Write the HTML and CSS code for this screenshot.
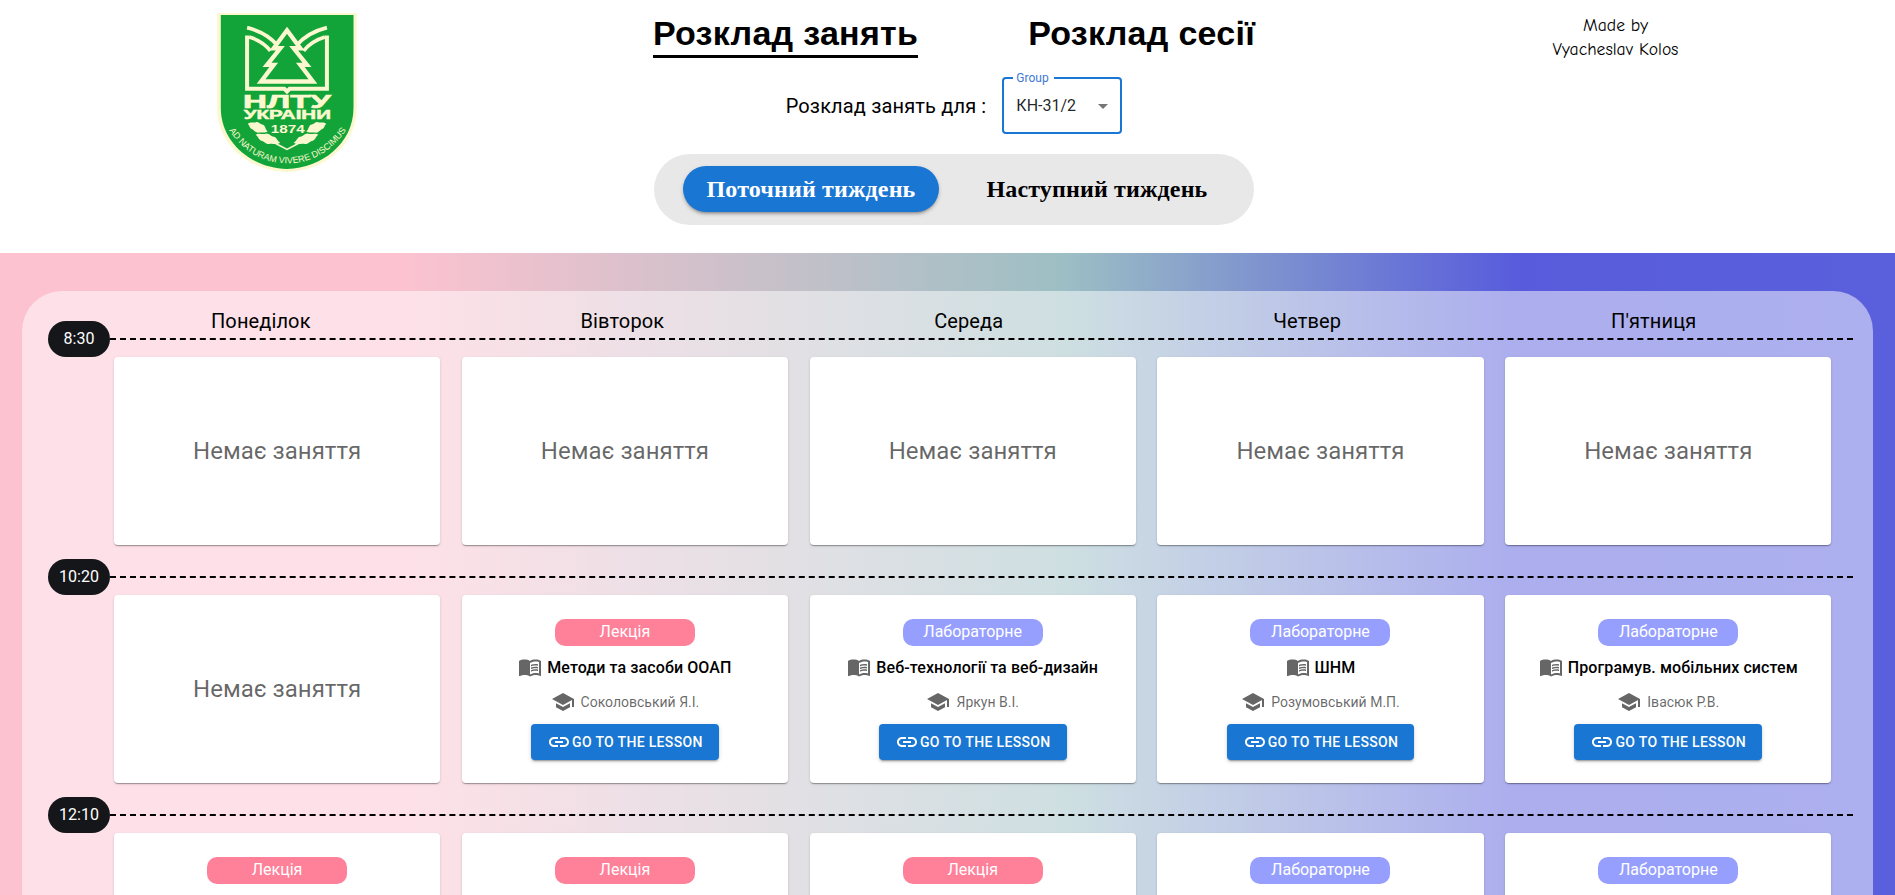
FILE: index.html
```html
<!DOCTYPE html>
<html lang="uk">
<head>
<meta charset="utf-8">
<title>Розклад занять</title>
<link rel="stylesheet" href="styles.css">
</head>
<body>
<div class="app">
  <header class="top">
    <div class="logo-col">
      <svg class="logo" viewBox="110 40 420 478" aria-label="НЛТУ України">
        <path class="cream" d="M110 40H530V325C530 440 430 515 320 518C210 515 110 440 110 325Z"/>
        <path class="green" d="M121 46H520V325C520 432 425 506 320 509C215 506 121 432 121 325Z"/>
        <path class="line" d="M200 108V268H312L320 276L328 268H440V108"/>
        <path class="line thin" d="M200 84C240 94 270 112 292 138M206 112C232 120 255 134 270 154"/>
        <path class="line thin" d="M440 84C400 94 370 112 348 138M434 112C408 120 385 134 370 154"/>
        <path class="tree" d="M320 92L360 146H340L380 196H360L398 246H242L280 196H260L300 146H280Z"/>
        <text class="logo-t big" x="188" y="326" textLength="264" lengthAdjust="spacingAndGlyphs">НЛТУ</text>
        <text class="logo-t mid" x="190" y="358" textLength="262" lengthAdjust="spacingAndGlyphs">УКРАІНИ</text>
        <text class="logo-t yr" x="271" y="400" textLength="102" lengthAdjust="spacingAndGlyphs">1874</text>
        <path class="cream" d="M202 374C208 366 222 372 228 368C236 366 240 376 248 376C256 380 254 390 262 396C250 402 240 398 232 400C222 398 220 390 212 388C206 384 208 378 202 374Z"/>
        <path class="cream" d="M226 406C236 398 248 408 258 402C268 402 272 412 282 412C290 416 290 424 300 430C288 438 276 430 266 434C256 434 252 426 242 424C234 420 234 412 226 406Z"/>
        <path class="cream" d="M438 374C432 366 418 372 412 368C404 366 400 376 392 376C384 380 386 390 378 396C390 402 400 398 408 400C418 398 420 390 428 388C434 384 432 378 438 374Z"/>
        <path class="cream" d="M414 406C404 398 392 408 382 402C372 402 368 412 358 412C350 416 350 424 340 430C352 438 364 430 374 434C384 434 388 426 398 424C406 420 406 412 414 406Z"/>
        <path class="line thin2" d="M286 432L320 450L354 432"/>
        <path id="motto" class="none" d="M146 392C190 462 255 492 320 492C385 492 450 462 498 392"/>
        <text class="logo-t motto"><textPath href="#motto" startOffset="50%" text-anchor="middle">AD NATURAM VIVERE DISCIMUS</textPath></text>
      </svg>
    </div>
    <div class="mid-col">
      <nav class="tabs">
        <a class="tab active">Розклад занять</a>
        <a class="tab">Розклад сесії</a>
      </nav>
      <div class="group-row">
        <span class="group-label">Розклад занять для :</span>
        <div class="select">
          <span class="select-legend">Group</span>
          <span class="select-value">КН-31/2</span>
          <svg class="select-arrow" viewBox="0 0 24 24"><path d="M7 10l5 5 5-5z"/></svg>
        </div>
      </div>
      <div class="week">
        <button class="week-btn on">Поточний тиждень</button>
        <button class="week-btn">Наступний тиждень</button>
      </div>
    </div>
    <div class="made">Made by<br>Vyacheslav Kolos</div>
  </header>

  <main class="stage">
    <section class="panel">
      <div class="days">
        <span>Понеділок</span><span>Вівторок</span><span>Середа</span><span>Четвер</span><span>П'ятниця</span>
      </div>

      <div class="slot">
        <div class="time"><span class="pill">8:30</span><i class="dash"></i></div>
        <div class="cards">
          <article class="card empty">Немає заняття</article>
          <article class="card empty">Немає заняття</article>
          <article class="card empty">Немає заняття</article>
          <article class="card empty">Немає заняття</article>
          <article class="card empty">Немає заняття</article>
        </div>
      </div>

      <div class="slot">
        <div class="time"><span class="pill">10:20</span><i class="dash"></i></div>
        <div class="cards">
          <article class="card empty">Немає заняття</article>
          <article class="card">
            <span class="badge lec">Лекція</span>
            <div class="subject"><svg class="ico" viewBox="0 0 24 24"><use href="#i-book"/></svg><span>Методи та засоби ООАП</span></div>
            <div class="teacher"><svg class="ico" viewBox="0 0 24 24"><use href="#i-school"/></svg><span>Соколовський Я.І.</span></div>
            <a class="go"><svg class="ico" viewBox="0 0 24 24"><use href="#i-link"/></svg>Go to the lesson</a>
          </article>
          <article class="card">
            <span class="badge lab">Лабораторне</span>
            <div class="subject"><svg class="ico" viewBox="0 0 24 24"><use href="#i-book"/></svg><span>Веб-технології та веб-дизайн</span></div>
            <div class="teacher"><svg class="ico" viewBox="0 0 24 24"><use href="#i-school"/></svg><span>Яркун В.І.</span></div>
            <a class="go"><svg class="ico" viewBox="0 0 24 24"><use href="#i-link"/></svg>Go to the lesson</a>
          </article>
          <article class="card">
            <span class="badge lab">Лабораторне</span>
            <div class="subject"><svg class="ico" viewBox="0 0 24 24"><use href="#i-book"/></svg><span>ШНМ</span></div>
            <div class="teacher"><svg class="ico" viewBox="0 0 24 24"><use href="#i-school"/></svg><span>Розумовський М.П.</span></div>
            <a class="go"><svg class="ico" viewBox="0 0 24 24"><use href="#i-link"/></svg>Go to the lesson</a>
          </article>
          <article class="card">
            <span class="badge lab">Лабораторне</span>
            <div class="subject"><svg class="ico" viewBox="0 0 24 24"><use href="#i-book"/></svg><span>Програмув. мобільних систем</span></div>
            <div class="teacher"><svg class="ico" viewBox="0 0 24 24"><use href="#i-school"/></svg><span>Івасюк Р.В.</span></div>
            <a class="go"><svg class="ico" viewBox="0 0 24 24"><use href="#i-link"/></svg>Go to the lesson</a>
          </article>
        </div>
      </div>

      <div class="slot">
        <div class="time"><span class="pill">12:10</span><i class="dash"></i></div>
        <div class="cards">
          <article class="card"><span class="badge lec">Лекція</span></article>
          <article class="card"><span class="badge lec">Лекція</span></article>
          <article class="card"><span class="badge lec">Лекція</span></article>
          <article class="card"><span class="badge lab">Лабораторне</span></article>
          <article class="card"><span class="badge lab">Лабораторне</span></article>
        </div>
      </div>
    </section>
  </main>
</div>

<svg class="sprite" aria-hidden="true">
  <symbol id="i-book" viewBox="0 0 24 24"><path d="M21 5c-1.11-.35-2.33-.5-3.5-.5-1.95 0-4.05.4-5.5 1.5-1.45-1.1-3.55-1.5-5.5-1.5S2.45 4.9 1 6v14.65c0 .25.25.5.5.5.1 0 .15-.05.25-.05C3.1 20.45 5.05 20 6.5 20c1.95 0 4.05.4 5.5 1.5 1.35-.85 3.8-1.5 5.5-1.5 1.65 0 3.35.3 4.75 1.05.1.05.15.05.25.05.25 0 .5-.25.5-.5V6c-.6-.45-1.25-.75-2-1zm0 13.5c-1.1-.35-2.3-.5-3.5-.5-1.7 0-4.15.65-5.5 1.5V8c1.35-.85 3.8-1.5 5.5-1.5 1.2 0 2.4.15 3.5.5v11.5z"/><path d="M17.5 10.5c.88 0 1.73.09 2.5.26V9.24c-.79-.15-1.64-.24-2.5-.24-1.7 0-3.24.29-4.5.83v1.66c1.13-.64 2.7-.99 4.5-.99zM13 12.49v1.66c1.13-.64 2.7-.99 4.5-.99.88 0 1.73.09 2.5.26V11.9c-.79-.15-1.64-.24-2.5-.24-1.7 0-3.24.3-4.5.83zm4.5 1.84c-1.7 0-3.24.29-4.5.83v1.66c1.13-.64 2.7-.99 4.5-.99.88 0 1.73.09 2.5.26v-1.52c-.79-.16-1.64-.24-2.5-.24z"/></symbol>
  <symbol id="i-school" viewBox="0 0 24 24"><path d="M5 13.18v4L12 21l7-3.82v-4L12 17l-7-3.82zM12 3 1 9l11 6 9-4.91V17h2V9L12 3z"/></symbol>
  <symbol id="i-link" viewBox="0 0 24 24"><path d="M3.9 12c0-1.71 1.39-3.1 3.1-3.1h4V7H7c-2.76 0-5 2.24-5 5s2.24 5 5 5h4v-1.9H7c-1.71 0-3.1-1.39-3.1-3.1zM8 13h8v-2H8v2zm9-6h-4v1.9h4c1.71 0 3.1 1.39 3.1 3.1s-1.39 3.1-3.1 3.1h-4V17h4c2.76 0 5-2.24 5-5s-2.24-5-5-5z"/></symbol>
</svg>
</body>
</html>
```

FILE: styles.css
```css
* { box-sizing: border-box; }
html, body { margin: 0; height: 100%; overflow: hidden; }
body { font-family: Roboto, "Noto Sans", sans-serif; color: #000; background: #fff; }
.sprite { display: none; }

.app { height: 895px; display: flex; flex-direction: column; overflow: hidden; }

/* header */
.top { height: 253px; flex: none; display: grid; grid-template-columns: 574px 760px 1fr; }
.logo-col { display: flex; justify-content: center; padding-top: 13px; }
.logo { width: 140px; height: 159px; }
.cream { fill: #fbf8cf; }
.green { fill: #12a439; }
.line { fill: none; stroke: #fbf8cf; stroke-width: 12; }
.line.thin { stroke-width: 11; }
.line.thin2 { stroke-width: 5; }
.none { fill: none; }
.tree { fill: #12a439; stroke: #fbf8cf; stroke-width: 13; stroke-linejoin: miter; }
.logo-t { fill: #fbf8cf; font-family: "Liberation Sans", sans-serif; font-weight: 700; }
.big { font-size: 56px; stroke: #fbf8cf; stroke-width: 2; }
.mid { font-size: 38px; stroke: #fbf8cf; stroke-width: 1.5; }
.yr { font-size: 34px; }
.motto { font-size: 27px; font-weight: 400; }

.mid-col { display: flex; flex-direction: column; align-items: center; }
.tabs { display: flex; gap: 110px; height: 58px; padding-top: 12px; }
.tab { font-family: "Liberation Sans", Arial, sans-serif; font-size: 34px; font-weight: 700; line-height: 43px; height: 46px; letter-spacing: .28px; }
.tab.active { border-bottom: 3px solid #000; }
.group-row { display: flex; align-items: center; gap: 16px; margin-top: 19px; }
.group-label { font-size: 20px; letter-spacing: .15px; }
.select { position: relative; width: 120px; height: 57px; border: 2px solid #1976d2; border-radius: 4px; display: flex; align-items: center; padding-left: 12px; }
.select-legend { position: absolute; top: -8px; left: 9px; padding: 0 5px 0 3px; background: #fff; font-size: 12px; line-height: 14px; color: #3f78d6; }
.select-value { font-size: 16px; color: rgba(0,0,0,.87); }
.select-arrow { position: absolute; right: 5px; top: 15px; width: 24px; height: 24px; fill: rgba(0,0,0,.54); }
.week { width: 600px; height: 71px; margin-top: 20px; padding: 12px 29px; background: #e8e8e8; border-radius: 36px; display: flex; gap: 24px; align-items: flex-start; }
.week-btn { height: 46px; padding: 0 23.5px; border: 0; border-radius: 23px; background: transparent; color: #000; font: 700 24px "Liberation Serif", serif; letter-spacing: .15px; white-space: nowrap; }
.week-btn.on { background: #1976d2; color: #fff; box-shadow: 0 3px 3px -2px rgba(0,0,0,.3), 0 2px 4px rgba(0,0,0,.2); }
.made { font-family: "Comic Neue", "Comic Sans MS", "DejaVu Sans", cursive; font-size: 17.6px; line-height: 24px; text-align: center; padding-top: 13px; padding-left: 2px; }

/* schedule */
.stage { flex: 1; padding: 38px 22px 0; background: linear-gradient(90deg, #fdc2d0 0%, #fdc2d0 21%, #9dbfc4 56%, #585cdc 80%, #5a60dc 100%); overflow: hidden; min-height: 0; }
.panel { background: rgba(255,255,255,.5); border-radius: 40px 40px 0 0; padding: 18px 41.6px 0 92px; min-height: 100%; }
.days { display: flex; justify-content: space-around; height: 24px; margin-left: -38px; font-size: 20px; line-height: 24px; letter-spacing: .12px; }
.slot + .slot { margin-top: 14px; }
.time { display: flex; align-items: center; height: 36px; margin: 0 -21.6px 0 -66px; }
.days + .slot .time { margin-top: -12px; }
.pill { width: 62px; height: 36px; flex: none; border-radius: 18px; background: #14161a; color: #fff; font-size: 16px; line-height: 36px; text-align: center; }
.dash { flex: 1; height: 0; border-top: 2px dashed #000; }
.cards { display: grid; grid-template-columns: repeat(5, 1fr); column-gap: 21.6px; }
.card { height: 188px; background: #fff; border-radius: 4px; box-shadow: 0 2px 1px -1px rgba(0,0,0,.2), 0 1px 1px rgba(0,0,0,.14), 0 1px 3px rgba(0,0,0,.12); display: flex; flex-direction: column; align-items: center; padding-top: 24px; }
.card.empty { justify-content: center; padding-top: 0; font-size: 24px; color: rgba(0,0,0,.6); }
.badge { width: 140px; height: 27px; border-radius: 10px; color: #fff; font-size: 16px; line-height: 26px; text-align: center; }
.lec { background: #ff8099; }
.lab { background: #969ffe; }
.ico { width: 24px; height: 24px; flex: none; fill: currentColor; }
.subject { display: flex; align-items: center; gap: 5px; height: 24px; margin-top: 9px; font-size: 16px; font-weight: 500; letter-spacing: .1px; }
.subject .ico { color: #666; }
.teacher { display: flex; align-items: center; gap: 6px; height: 24px; margin-top: 11px; font-size: 14px; color: rgba(0,0,0,.6); }
.teacher .ico { color: #666; }
.go { display: inline-flex; align-items: center; gap: 1px; height: 36px; margin-top: 10px; padding: 0 16px; background: #1976d2; color: #fff; border-radius: 4px; font-size: 14px; font-weight: 500; letter-spacing: .33px; text-transform: uppercase; box-shadow: 0 3px 1px -2px rgba(0,0,0,.2), 0 2px 2px rgba(0,0,0,.14), 0 1px 5px rgba(0,0,0,.12); }
```
